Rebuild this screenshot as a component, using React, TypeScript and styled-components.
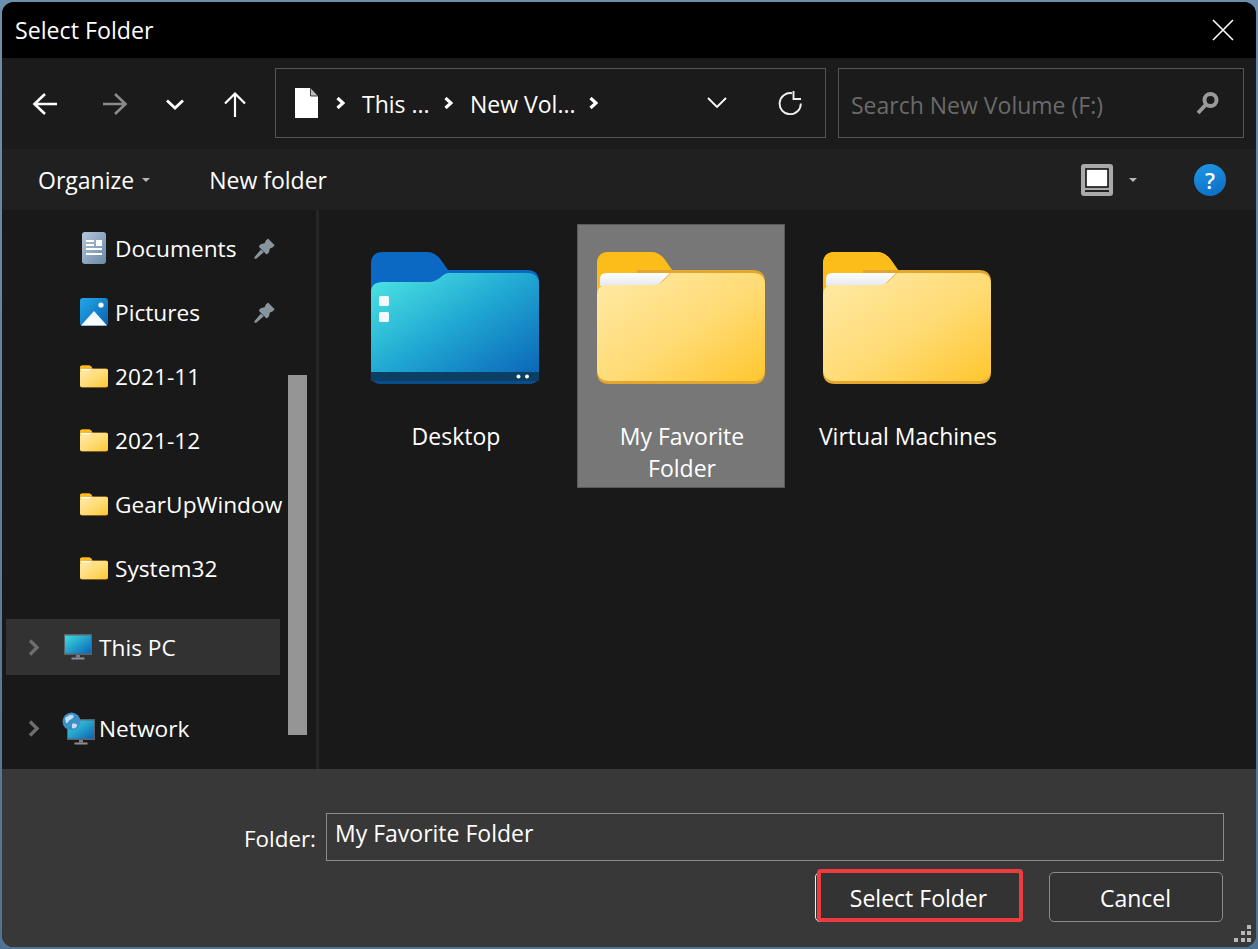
import React from "react";
import styled, { createGlobalStyle } from "styled-components";

const Global = createGlobalStyle`
  html, body { margin: 0; padding: 0; background: #5f819f; }
  body { font-family: "Open Sans", "Noto Sans", sans-serif; font-size: 23px; color: #fff; }
  * { box-sizing: border-box; }
`;

const Page = styled.div`
  width: 1258px;
  height: 949px;
  padding: 2px;
  background: linear-gradient(180deg, #6b8fae 0%, #4f7493 100%);
  overflow: hidden;
`;
const Win = styled.div`
  width: 1254px;
  height: 945px;
  border-radius: 12px;
  overflow: hidden;
  display: flex;
  flex-direction: column;
  background: #191919;
`;
const TitleBar = styled.header`
  height: 56px;
  flex: none;
  background: #000;
  display: flex;
  align-items: center;
  justify-content: space-between;
  padding: 0 22px 0 13px;
`;
const Title = styled.span`
  font-size: 23.2px;
`;
const NavBar = styled.nav`
  height: 91px;
  flex: none;
  background: #1b1b1b;
  display: flex;
  align-items: flex-start;
  padding: 10px 12px 0 13px;
`;
const NavButton = styled.button<{ $after?: number }>`
  width: 60px;
  height: 72px;
  margin-right: ${(p) => p.$after ?? 0}px;
  padding: 0;
  border: 0;
  background: none;
  display: flex;
  align-items: center;
  justify-content: center;
  flex: none;
`;
const Address = styled.div`
  width: 551px;
  height: 70px;
  flex: none;
  border: 1px solid #555;
  display: flex;
  align-items: center;
  padding: 0 23px 0 19px;
`;
const Crumb = styled.span<{ $w: number }>`
  width: ${(p) => p.$w}px;
  flex: none;
  padding-top: 2px;
  display: flex;
  align-items: center;
  white-space: nowrap;
`;
const CrumbGap = styled.span<{ $w: number }>`
  width: ${(p) => p.$w}px;
  flex: none;
  display: flex;
  justify-content: center;
`;
const AddressEnd = styled.span`
  margin-left: auto;
  display: flex;
  align-items: center;
  gap: 51px;
`;
const SearchBox = styled.div`
  width: 406px;
  height: 70px;
  flex: none;
  margin-left: 12px;
  border: 1px solid #555;
  display: flex;
  align-items: center;
  justify-content: space-between;
  padding: 0 24px 0 12px;
  color: #6a6a6a;
`;
const SearchText = styled.span`
  padding-top: 3px;
`;
const CommandBar = styled.div`
  height: 61px;
  flex: none;
  background: #202020;
  display: flex;
  align-items: center;
  padding: 1px 30px 0 36px;
`;
const Command = styled.span`
  display: flex;
  align-items: center;
  gap: 8px;
`;
const CommandGap = styled.span`
  width: 59px;
  flex: none;
`;
const CommandEnd = styled.span`
  margin-left: auto;
  display: flex;
  align-items: center;
`;
const Caret = styled.span<{ $left?: number }>`
  width: 0;
  height: 0;
  margin-left: ${(p) => p.$left ?? 0}px;
  border-left: 4.5px solid transparent;
  border-right: 4.5px solid transparent;
  border-top: 4.5px solid #b8b8b8;
`;
const Help = styled.span`
  width: 32px;
  height: 32px;
  margin-left: 57px;
  border-radius: 50%;
  background: linear-gradient(160deg, #1f98e6, #0a6bc4);
  display: flex;
  align-items: center;
  justify-content: center;
  font-size: 22px;
  font-weight: 600;
`;
const Content = styled.div`
  flex: 1;
  min-height: 0;
  display: flex;
  background: #191919;
`;
const Sidebar = styled.aside`
  width: 317px;
  flex: none;
  display: flex;
  border-right: 3px solid #262626;
  font-size: 22.7px;
`;
const NavList = styled.div`
  width: 286px;
  flex: none;
  padding: 6px 0 0 4px;
  display: flex;
  flex-direction: column;
`;
const TreeRow = styled.div<{ $indent: number; $active?: boolean; $top?: number; $tall?: boolean }>`
  height: ${(p) => (p.$tall ? 56 : 64)}px;
  width: 274px;
  flex: none;
  margin-top: ${(p) => p.$top ?? 0}px;
  padding-left: ${(p) => p.$indent}px;
  display: flex;
  align-items: center;
  position: relative;
  background: ${(p) => (p.$active ? "#323232" : "transparent")};
  white-space: nowrap;
`;
const TreeIcon = styled.span`
  width: 28px;
  flex: none;
  margin-right: 7px;
  display: flex;
  justify-content: center;
  svg { flex: none; }
`;
const Twisty = styled.span`
  width: 36px;
  flex: none;
  margin-right: 22px;
  padding-left: 22px;
  display: flex;
`;
const PinSlot = styled.span`
  margin-left: auto;
  margin-right: 5px;
  display: flex;
`;
const ScrollThumb = styled.div`
  width: 19px;
  height: 360px;
  margin: 165px 0 0 0;
  flex: none;
  background: #959595;
`;
const Files = styled.main`
  flex: 1;
  padding: 14px 0 0 32px;
  display: flex;
  align-items: flex-start;
  gap: 18px;
`;
const Tile = styled.div<{ $selected?: boolean }>`
  width: 208px;
  height: ${(p) => (p.$selected ? 264 : 232)}px;
  padding-top: 28px;
  display: flex;
  flex-direction: column;
  align-items: center;
  background: ${(p) => (p.$selected ? "#777" : "transparent")};
  outline: ${(p) => (p.$selected ? "1px solid #5a5a5a" : "none")};
  outline-offset: -1px;
`;
const TileName = styled.span`
  margin-top: 35px;
  width: 190px;
  padding-left: 2px;
  text-align: center;
  line-height: 32px;
`;
const Footer = styled.footer`
  height: 178px;
  flex: none;
  background: #383838;
  padding: 44px 32px 0 0;
  display: flex;
  flex-direction: column;
  position: relative;
`;
const FolderRow = styled.div`
  display: flex;
  align-items: center;
  justify-content: flex-end;
`;
const FolderLabel = styled.label`
  margin: 2px 10px 0 0;
  font-size: 22.4px;
`;
const FolderInput = styled.div`
  width: 898px;
  height: 48px;
  border: 1px solid #8c8c8c;
  padding: 1px 8px 0;
  display: flex;
  align-items: flex-start;
  line-height: 36px;
`;
const Buttons = styled.div`
  margin: 11px 1px 0 0;
  display: flex;
  justify-content: flex-end;
  gap: 26px;
`;
const DialogButton = styled.button<{ $w: number; $primary?: boolean }>`
  width: ${(p) => p.$w}px;
  height: 50px;
  position: relative;
  border: 1px solid ${(p) => (p.$primary ? "#f0f0f0" : "#8a8a8a")};
  border-radius: 5px;
  background: #333;
  color: #fff;
  font: inherit;
  padding: 2px 1px 0 0;
`;
const Highlight = styled.span`
  position: absolute;
  left: 1px;
  right: -1px;
  top: -4px;
  bottom: -1px;
  border: 4px solid #ee3b3e;
  border-radius: 4px;
  pointer-events: none;
`;
const Grip = styled.svg`
  position: absolute;
  right: 4px;
  bottom: 4px;
`;

const Back = ({ color = "#fff", flip = false }: { color?: string; flip?: boolean }) => (
  <svg width="26" height="24" viewBox="0 0 26 24" fill="none" stroke={color} strokeWidth="2.6" style={flip ? { transform: "scaleX(-1)" } : undefined}>
    <path d="M25 12H3M13 2L2.5 12 13 22" />
  </svg>
);
const Down = () => (
  <svg width="18" height="11" viewBox="0 0 18 11" fill="none" stroke="#fff" strokeWidth="2.8">
    <path d="M1 1.5l8 7.5 8-7.5" />
  </svg>
);
const ThinDown = () => (
  <svg width="20" height="12" viewBox="0 0 20 12" fill="none" stroke="#fff" strokeWidth="1.8">
    <path d="M1 1l9 9 9-9" />
  </svg>
);
const Up = () => (
  <svg width="24" height="26" viewBox="0 0 24 26" fill="none" stroke="#fff" strokeWidth="2.2">
    <path d="M12 26V3M2 12.5L12 2.5l10 10" />
  </svg>
);
const FileIcon = () => (
  <svg width="23" height="30" viewBox="0 0 23 30">
    <path d="M0 1.5V30h23V8.5L15 0H0z" fill="#fff" />
    <path d="M15.5 0.5V8H22.5" fill="#bbb" stroke="#1b1b1b" strokeWidth="0.8" />
  </svg>
);
const Sep = () => (
  <svg width="9" height="12" viewBox="0 0 9 12" fill="none" stroke="#fff" strokeWidth="3.2">
    <path d="M1.5 1l5.5 5-5.5 5" />
  </svg>
);
const Refresh = () => (
  <svg width="24" height="24" viewBox="0 0 24 24" fill="none" stroke="#f0f0f0" strokeWidth="1.9">
    <path d="M14 2.2A10.6 10.6 0 1 0 22.8 12.5" />
    <path d="M15.5 0v8H23" />
  </svg>
);
const Close = () => (
  <svg width="22" height="22" viewBox="0 0 22 22" fill="none" stroke="#fff" strokeWidth="1.6">
    <path d="M1 1l20 20M21 1L1 21" />
  </svg>
);
const SearchIcon = () => (
  <svg width="23" height="24" viewBox="0 0 23 24" fill="none" stroke="#999">
    <circle cx="14.5" cy="9" r="6" strokeWidth="4" />
    <path d="M9.5 14L2 22" strokeWidth="4" />
  </svg>
);
const ViewIcon = () => (
  <svg width="32" height="32" viewBox="0 0 32 32">
    <rect width="32" height="32" rx="3" fill="#a9a9a9" />
    <rect x="5" y="5" width="22" height="18" fill="#fff" stroke="#111" strokeWidth="1.6" />
    <rect x="4" y="26" width="24" height="2" fill="#222" />
  </svg>
);
const Pin = () => (
  <svg width="21" height="21" viewBox="0 0 21 21" fill="#8a949c">
    <path d="M14 0.5L20.7 7.2 18.5 9.5 16 10.5 14.6 15 12.5 16.5 4.8 8.8 6.2 6.6 10.8 5 11.8 2.6Z" />
    <path d="M7 11.5L9.8 14.2 2.2 20.8H0.5V19Z" />
  </svg>
);
const DocIcon = () => (
  <svg width="24" height="32" viewBox="0 0 24 32">
    <defs>
      <linearGradient id="doc" x1="0" y1="0" x2="1" y2="1">
        <stop offset="0" stopColor="#b4c7da" />
        <stop offset="1" stopColor="#6b88a6" />
      </linearGradient>
    </defs>
    <rect width="24" height="32" rx="3" fill="url(#doc)" />
    <path d="M4 9h8M4 13h8M4 17h16M4 22h16" stroke="#fff" strokeWidth="2" />
    <rect x="14" y="8" width="6" height="6" fill="#fff" />
  </svg>
);
const PictureIcon = () => (
  <svg width="28" height="28" viewBox="0 0 28 28">
    <defs>
      <linearGradient id="pic" x1="0" y1="0" x2="1" y2="1">
        <stop offset="0" stopColor="#22a8ea" />
        <stop offset="1" stopColor="#0a60b0" />
      </linearGradient>
      <linearGradient id="mtn" x1="0" y1="0" x2="0" y2="1">
        <stop offset="0" stopColor="#e6f0fb" />
        <stop offset="1" stopColor="#fff" />
      </linearGradient>
    </defs>
    <rect width="28" height="28" rx="3" fill="url(#pic)" />
    <path d="M1 27.5L14 13l13 14.5z" fill="url(#mtn)" />
    <circle cx="21" cy="7" r="2.6" fill="#fff" />
  </svg>
);
const Screen = ({ id }: { id: string }) => (
  <>
    <defs>
      <linearGradient id={id} x1="0" y1="0" x2="1" y2="1">
        <stop offset="0" stopColor="#3bdde2" />
        <stop offset="1" stopColor="#0c62b4" />
      </linearGradient>
    </defs>
    <rect x="0" y="0" width="28" height="21" fill="#5c6168" />
    <rect x="1" y="1.5" width="26" height="18" fill={`url(#${id})`} />
    <rect x="12" y="21" width="4" height="2.5" fill="#7c8087" />
    <rect x="7.5" y="23.5" width="13" height="2" fill="#8b8f95" />
  </>
);
const PcIcon = () => (
  <svg width="28" height="26" viewBox="0 0 28 26">
    <Screen id="pc" />
  </svg>
);
const NetworkIcon = () => (
  <svg width="33" height="33" viewBox="0 0 33 33">
    <g transform="translate(5 7)">
      <Screen id="net" />
    </g>
    <circle cx="9.5" cy="9.5" r="9" fill="#3d8fc8" />
    <path d="M3 6c3-2 5-4 8-3 2 2-1 4-3 5s-2 4-4 3zM10 12c3-1 6 0 5 2s-3 3-5 2z" fill="#bfe0f2" />
  </svg>
);
const Chevron = () => (
  <svg width="12" height="17" viewBox="0 0 12 17" fill="none" stroke="#6e6e6e" strokeWidth="3.4">
    <path d="M2 1.5l7 7-7 7" />
  </svg>
);
const SmallFolder = () => (
  <svg width="28" height="23" viewBox="0 0 168 133">
    <use href="#yellow-folder" />
  </svg>
);
const YellowDefs = () => (
  <svg width="0" height="0" style={{ position: "absolute" }}>
    <defs>
      <linearGradient id="yf" x1="0" y1="0" x2="1" y2="1">
        <stop offset="0" stopColor="#ffeaa8" />
        <stop offset="0.55" stopColor="#ffdb74" />
        <stop offset="1" stopColor="#ffc62e" />
      </linearGradient>
      <linearGradient id="yp" x1="0" y1="0" x2="0" y2="1">
        <stop offset="0" stopColor="#fff" />
        <stop offset="1" stopColor="#d8dde6" />
      </linearGradient>
      <linearGradient id="bf" x1="0" y1="0" x2="1" y2="1">
        <stop offset="0" stopColor="#4ee8e4" />
        <stop offset="0.5" stopColor="#1fa6d2" />
        <stop offset="1" stopColor="#0a62b6" />
      </linearGradient>
      <g id="yellow-folder">
        <path d="M12 0H54Q62 0 68 8L75 18H156Q168 18 168 30V120Q168 132 156 132H12Q0 132 0 120V12Q0 0 12 0Z" fill="#e3a62e" />
        <path d="M12 0H54Q62 0 68 8L75 18H40V40H0V12Q0 0 12 0Z" fill="#fcbc1a" />
        <path d="M3 40V27Q3 21 9 21H73L60 34H3Z" fill="url(#yp)" />
        <path d="M0 43Q0 33 10 33H56Q62 33 66 29L74 21H156Q168 21 168 33V117Q168 129 156 129H12Q0 129 0 117Z" fill="url(#yf)" />
      </g>
    </defs>
  </svg>
);
const BigYellow = () => (
  <svg width="168" height="133" viewBox="0 0 168 133">
    <use href="#yellow-folder" />
  </svg>
);
const BigBlue = () => (
  <svg width="168" height="133" viewBox="0 0 168 133">
    <path d="M12 0H56Q64 0 70 8L77 18H156Q168 18 168 30V120Q168 132 156 132H12Q0 132 0 120V12Q0 0 12 0Z" fill="#0b69c4" />
    <path d="M0 40Q0 30 12 30H58Q64 30 70 25Q74 21 78 21H156Q168 21 168 33V128H0Z" fill="url(#bf)" />
    <path d="M0 120H168V124Q168 132 156 132H12Q0 132 0 124Z" fill="#0a4d8c" />
    <rect y="120" width="168" height="9" fill="#0c3f64" />
    <rect x="8" y="44" width="10" height="10" rx="1.5" fill="#f4f8ff" />
    <rect x="8" y="60" width="10" height="10" rx="1.5" fill="#f4f8ff" />
    <circle cx="147.5" cy="124.5" r="2" fill="#fff" />
    <circle cx="156" cy="124.5" r="2" fill="#fff" />
  </svg>
);

export default function App() {
  return (
    <Page>
      <Global />
      <YellowDefs />
      <Win>
        <TitleBar>
          <Title>Select Folder</Title>
          <Close />
        </TitleBar>
        <NavBar>
          <NavButton $after={10}><Back /></NavButton>
          <NavButton><Back color="#8a8a8a" flip /></NavButton>
          <NavButton><Down /></NavButton>
          <NavButton $after={10}><Up /></NavButton>
          <Address>
            <FileIcon />
            <CrumbGap $w={44}><Sep /></CrumbGap>
            <Crumb $w={65}>This ...</Crumb>
            <CrumbGap $w={43}><Sep /></CrumbGap>
            <Crumb $w={102}>New Vol...</Crumb>
            <CrumbGap $w={42}><Sep /></CrumbGap>
            <AddressEnd>
              <ThinDown />
              <Refresh />
            </AddressEnd>
          </Address>
          <SearchBox>
            <SearchText>Search New Volume (F:)</SearchText>
            <SearchIcon />
          </SearchBox>
        </NavBar>
        <CommandBar>
          <Command>Organize <Caret /></Command>
          <CommandGap />
          <Command>New folder</Command>
          <CommandEnd>
            <ViewIcon />
            <Caret $left={16} />
            <Help>?</Help>
          </CommandEnd>
        </CommandBar>
        <Content>
          <Sidebar>
            <NavList>
              <TreeRow $indent={74}><TreeIcon><DocIcon /></TreeIcon>Documents<PinSlot><Pin /></PinSlot></TreeRow>
              <TreeRow $indent={74}><TreeIcon><PictureIcon /></TreeIcon>Pictures<PinSlot><Pin /></PinSlot></TreeRow>
              <TreeRow $indent={74}><TreeIcon><SmallFolder /></TreeIcon>2021-11</TreeRow>
              <TreeRow $indent={74}><TreeIcon><SmallFolder /></TreeIcon>2021-12</TreeRow>
              <TreeRow $indent={74}><TreeIcon><SmallFolder /></TreeIcon>GearUpWindow</TreeRow>
              <TreeRow $indent={74}><TreeIcon><SmallFolder /></TreeIcon>System32</TreeRow>
              <TreeRow $indent={0} $active $tall $top={19}><Twisty><Chevron /></Twisty><TreeIcon><PcIcon /></TreeIcon>This PC</TreeRow>
              <TreeRow $indent={0} $tall $top={25}><Twisty><Chevron /></Twisty><TreeIcon><NetworkIcon /></TreeIcon>Network</TreeRow>
            </NavList>
            <ScrollThumb />
          </Sidebar>
          <Files>
            <Tile><BigBlue /><TileName>Desktop</TileName></Tile>
            <Tile $selected><BigYellow /><TileName>My Favorite Folder</TileName></Tile>
            <Tile><BigYellow /><TileName>Virtual Machines</TileName></Tile>
          </Files>
        </Content>
        <Footer>
          <FolderRow>
            <FolderLabel>Folder:</FolderLabel>
            <FolderInput>My Favorite Folder</FolderInput>
          </FolderRow>
          <Buttons>
            <DialogButton $w={208} $primary>Select Folder<Highlight /></DialogButton>
            <DialogButton $w={174}>Cancel</DialogButton>
          </Buttons>
          <Grip width="18" height="18" viewBox="0 0 18 18" fill="#b8b8b8">
            <rect x="13" y="0" width="4" height="4" />
            <rect x="7" y="6" width="4" height="4" />
            <rect x="13" y="6" width="4" height="4" />
            <rect x="0" y="13" width="4" height="4" />
            <rect x="7" y="13" width="4" height="4" />
            <rect x="13" y="13" width="4" height="4" />
          </Grip>
        </Footer>
      </Win>
    </Page>
  );
}
